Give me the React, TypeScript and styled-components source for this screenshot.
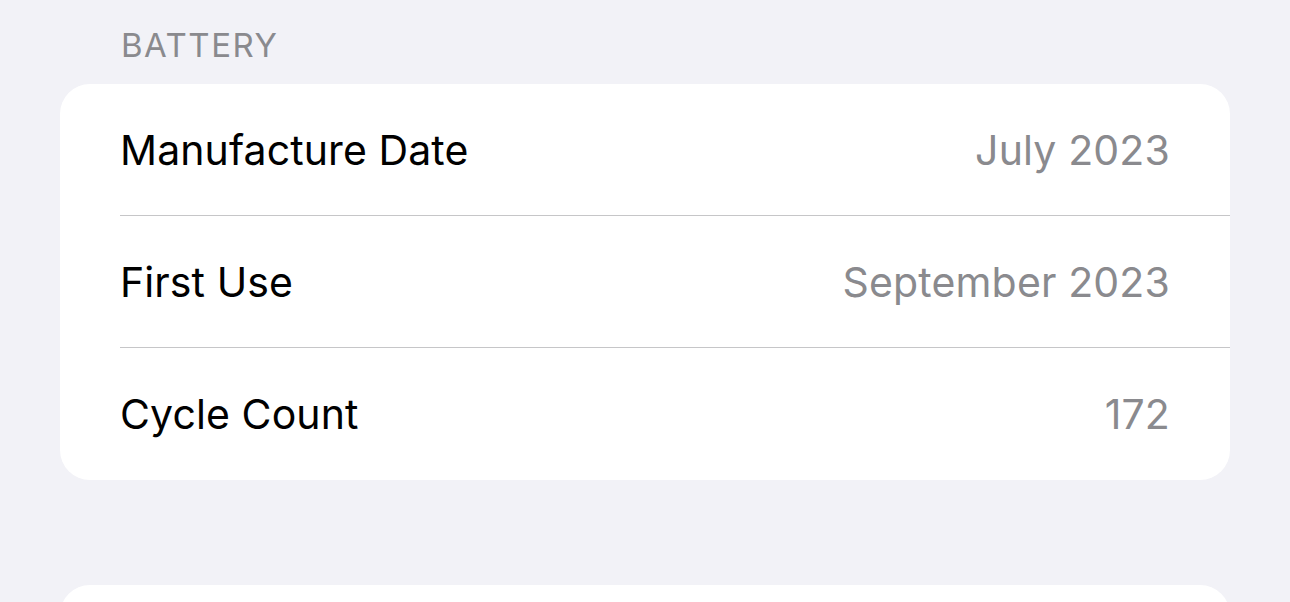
import React from "react";
import styled, { createGlobalStyle } from "styled-components";

const Global = createGlobalStyle`
  html, body { margin: 0; padding: 0; background: #F2F2F7; }
  body { font-family: Inter, "Noto Sans", sans-serif; -webkit-font-smoothing: antialiased; }
`;

const Page = styled.div`
  width: 1290px;
  height: 602px;
  overflow: hidden;
  box-sizing: border-box;
  padding: 0 60px;
  display: flex;
  flex-direction: column;
`;

const SectionHeader = styled.div`
  padding: 26px 0 0 61px;
  height: 84px;
  flex-shrink: 0;
  box-sizing: border-box;
  font-size: 33px;
  line-height: 38px;
  color: #8a8a8e;
  letter-spacing: 1.5px;
`;

const Card = styled.div`
  background: #ffffff;
  border-radius: 30px;
  overflow: hidden;
  display: flex;
  flex-direction: column;
  flex-shrink: 0;
`;

const Row = styled.div<{ $last?: boolean }>`
  height: ${(p) => (p.$last ? 132 : 131)}px;
  margin-left: 60px;
  padding-right: 60px;
  display: flex;
  align-items: center;
  justify-content: space-between;
  border-bottom: ${(p) => (p.$last ? "none" : "1px solid #c6c6c8")};
`;

const Label = styled.span`
  font-size: 41px;
  color: #000;
  letter-spacing: 0.1px;
`;

const Value = styled.span`
  font-size: 41px;
  color: #8a8a8e;
  letter-spacing: 0.15px;
`;

const Spacer = styled.div`
  height: 105px;
  flex-shrink: 0;
`;

const EmptyCard = styled(Card)`
  height: 120px;
`;

const rows = [
  { label: "Manufacture Date", value: "July 2023" },
  { label: "First Use", value: "September 2023" },
  { label: "Cycle Count", value: "172" },
];

export default function App() {
  return (
    <>
      <Global />
      <Page>
        <SectionHeader>BATTERY</SectionHeader>
        <Card>
          {rows.map((r, i) => (
            <Row key={r.label} $last={i === rows.length - 1}>
              <Label>{r.label}</Label>
              <Value>{r.value}</Value>
            </Row>
          ))}
        </Card>
        <Spacer />
        <EmptyCard />
      </Page>
    </>
  );
}
